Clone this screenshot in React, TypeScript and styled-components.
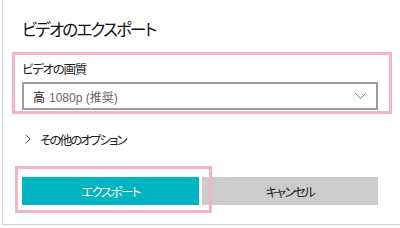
import React from 'react';
import styled, { createGlobalStyle } from 'styled-components';

const GlobalStyle = createGlobalStyle`
  html, body {
    margin: 0;
    padding: 0;
    background: #ffffff;
  }
  body {
    font-family: "Liberation Sans", "Noto Sans CJK JP", sans-serif;
    font-feature-settings: "palt";
    color: #1a1a1a;
  }
`;

const Page = styled.div`
  position: relative;
  width: 400px;
  height: 228px;
  overflow: hidden;
`;

const Dialog = styled.div`
  margin-left: 2px;
  height: 225px;
  box-sizing: border-box;
  border-left: 1px solid #cfcfcf;
  border-bottom: 1px solid #cfcfcf;
  padding: 18px 0 0 19px;
`;

const Title = styled.h1`
  margin: 0;
  font-size: 16.5px;
  font-weight: normal;
  letter-spacing: -1.8px;
  line-height: 24px;
  color: #111;
`;

const FieldLabel = styled.div`
  margin-top: 19px;
  font-size: 12.5px;
  letter-spacing: -1.3px;
  line-height: 18px;
  color: #222;
`;

const Select = styled.div`
  margin-top: 3px;
  width: 356px;
  height: 28px;
  box-sizing: border-box;
  border: 2px solid #9c9c9c;
  display: flex;
  align-items: center;
  justify-content: space-between;
  padding: 0 10px 0 9px;
  font-size: 12px;
`;

const SelectValue = styled.span`
  color: #666;
`;

const Strong = styled.span`
  color: #222;
  margin-right: 4px;
`;

const OptionsRow = styled.div`
  margin-top: 19px;
  display: flex;
  align-items: center;
  gap: 9px;
  padding-left: 3px;
  height: 20px;
  font-size: 12.5px;
  color: #222;
`;

const OptionsText = styled.span`
  letter-spacing: -1.9px;
`;

const Buttons = styled.div`
  margin-top: 28px;
  width: 356px;
  display: flex;
  gap: 3px;
`;

const Button = styled.button<{ $primary?: boolean }>`
  flex: ${p => (p.$primary ? '0 0 177px' : '1')};
  height: 28px;
  border: none;
  margin: 0;
  padding: 0;
  font-family: inherit;
  font-feature-settings: "palt";
  font-size: 12.5px;
  letter-spacing: -1.6px;
  background: ${p => (p.$primary ? '#00b4c2' : '#cccccc')};
  color: ${p => (p.$primary ? '#ffffff' : '#222222')};
`;

const Highlight = styled.div<{ $left: number; $top: number; $w: number; $h: number }>`
  position: absolute;
  left: ${p => p.$left}px;
  top: ${p => p.$top}px;
  width: ${p => p.$w}px;
  height: ${p => p.$h}px;
  box-sizing: border-box;
  border: 3px solid #f5b3cb;
  pointer-events: none;
`;

const ChevronDown = () => (
  <svg width="11" height="6" viewBox="0 0 11 6">
    <polyline points="0.5,0.5 5.5,5.5 10.5,0.5" fill="none" stroke="#777" strokeWidth="1" />
  </svg>
);

const ChevronRight = () => (
  <svg width="6" height="10" viewBox="0 0 6 10">
    <polyline points="0.5,0.5 5,5 0.5,9.5" fill="none" stroke="#555" strokeWidth="1" />
  </svg>
);

export default function App() {
  return (
    <>
      <GlobalStyle />
      <Page>
        <Dialog>
          <Title>ビデオのエクスポート</Title>
          <FieldLabel>ビデオの画質</FieldLabel>
          <Select>
            <SelectValue>
              <Strong>高</Strong>1080p (推奨)
            </SelectValue>
            <ChevronDown />
          </Select>
          <OptionsRow>
            <ChevronRight />
            <OptionsText>その他のオプション</OptionsText>
          </OptionsRow>
          <Buttons>
            <Button $primary>エクスポート</Button>
            <Button>キャンセル</Button>
          </Buttons>
        </Dialog>
        <Highlight $left={12} $top={52} $w={380} $h={62} />
        <Highlight $left={15} $top={166} $w={197} $h={47} />
      </Page>
    </>
  );
}
